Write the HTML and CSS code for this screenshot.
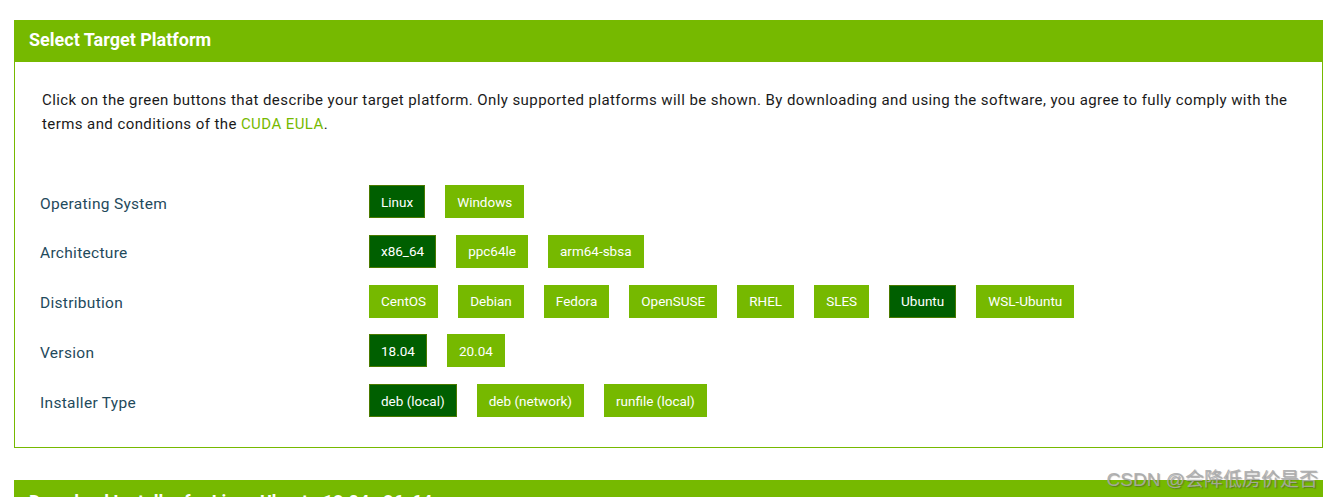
FILE: index.html
```html
<!DOCTYPE html>
<html lang="en">
<head>
<meta charset="utf-8">
<title>Select Target Platform</title>
<link rel="stylesheet" href="styles.css">
</head>
<body>
<div class="page">
  <section class="panel">
    <div class="panel-head">Select Target Platform</div>
    <div class="panel-body">
      <p class="intro">Click on the green buttons that describe your target platform. Only supported platforms will be shown. By downloading and using the software, you agree to fully comply with the terms and conditions of the <a class="link" href="#">CUDA EULA</a>.</p>
      <div class="rows">
        <div class="row">
          <div class="label">Operating System</div>
          <div class="opts">
            <span class="btn on">Linux</span>
            <span class="btn">Windows</span>
          </div>
        </div>
        <div class="row">
          <div class="label">Architecture</div>
          <div class="opts">
            <span class="btn on">x86_64</span>
            <span class="btn">ppc64le</span>
            <span class="btn">arm64-sbsa</span>
          </div>
        </div>
        <div class="row">
          <div class="label">Distribution</div>
          <div class="opts">
            <span class="btn">CentOS</span>
            <span class="btn">Debian</span>
            <span class="btn">Fedora</span>
            <span class="btn">OpenSUSE</span>
            <span class="btn">RHEL</span>
            <span class="btn">SLES</span>
            <span class="btn on">Ubuntu</span>
            <span class="btn">WSL-Ubuntu</span>
          </div>
        </div>
        <div class="row">
          <div class="label">Version</div>
          <div class="opts">
            <span class="btn on">18.04</span>
            <span class="btn">20.04</span>
          </div>
        </div>
        <div class="row">
          <div class="label">Installer Type</div>
          <div class="opts">
            <span class="btn on">deb (local)</span>
            <span class="btn">deb (network)</span>
            <span class="btn">runfile (local)</span>
          </div>
        </div>
      </div>
    </div>
  </section>
  <section class="panel next">
    <div class="panel-head">Download Installer for Linux Ubuntu 18.04 x86_64</div>
  </section>
</div>
<div class="watermark">CSDN @会降低房价是否</div>
</body>
</html>
```

FILE: styles.css
```css
html, body {
  margin: 0;
  padding: 0;
  background: #ffffff;
  overflow: hidden;
}
body {
  font-family: Roboto, "Liberation Sans", sans-serif;
  color: #1a1a1a;
}
.page {
  padding: 20px 9px 0 14px;
}
.panel {
  border: 1px solid #76b900;
  width: 1309px;
  box-sizing: border-box;
}
.panel-head {
  background: #76b900;
  color: #ffffff;
  font-weight: 700;
  font-size: 18px;
  height: 41px;
  line-height: 38px;
  padding-left: 15px;
  margin-top: -1px;
  margin-left: -1px;
  margin-right: -1px;
  padding-top: 1px;
}
.panel-body {
  padding: 26px 20px 30px 25px;
}
.intro {
  margin: 0 0 49px 2px;
  font-size: 15px;
  letter-spacing: 0.42px;
  line-height: 24px;
  color: #1a1a1a;
}
.link {
  color: #76b900;
  text-decoration: none;
}
.rows {
  display: flex;
  flex-direction: column;
  gap: 16.8px;
}
.row {
  display: flex;
  align-items: center;
}
.label {
  width: 329px;
  flex: none;
  font-size: 15.5px;
  letter-spacing: 0.3px;
  color: #1f4a5c;
  padding-top: 4px;
}
.opts {
  display: flex;
  gap: 20px;
}
.btn {
  display: flex;
  align-items: center;
  height: 33px;
  box-sizing: border-box;
  padding: 0 11px;
  border: 1px solid #76b900;
  background: #76b900;
  color: #ffffff;
  font-size: 13.5px;
}
.btn.on {
  background: #005f00;
  border-color: #4a7a00;
}
.next {
  margin-top: 32px;
  border-bottom: none;
}
.next .panel-head {
  padding-top: 3px;
}
.watermark {
  position: absolute;
  right: 14px;
  top: 464px;
  font-family: "Liberation Sans", "Noto Sans CJK SC", sans-serif;
  font-size: 19px;
  color: rgba(170, 170, 170, 0.9);
  text-shadow: 1px 1px 1px rgba(60, 60, 60, 0.45);
}
```
